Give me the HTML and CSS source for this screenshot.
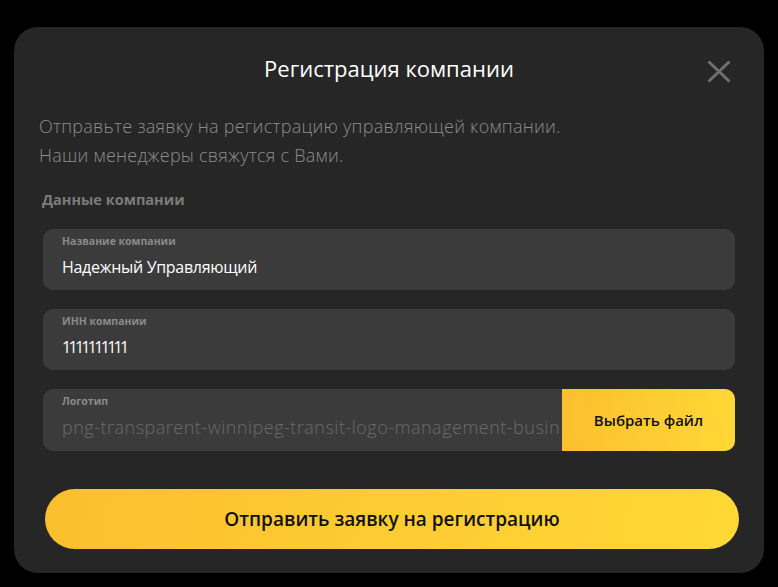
FILE: index.html
```html
<!DOCTYPE html>
<html lang="ru">
<head>
<meta charset="utf-8">
<title>Регистрация компании</title>
<link rel="stylesheet" href="styles.css">
</head>
<body>
<div class="modal">
  <div class="header">
    <span></span>
    <h1 class="title">Регистрация компании</h1>
    <button class="close" aria-label="Закрыть">
      <svg width="24" height="23" viewBox="0 0 24 23"><path d="M1.5 1.5 L22.5 21.5 M22.5 1.5 L1.5 21.5" stroke="#6f6f6f" stroke-width="3" fill="none"/></svg>
    </button>
  </div>
  <p class="desc">Отправьте заявку на регистрацию управляющей компании.<br>Наши менеджеры свяжутся с Вами.</p>
  <div class="section">Данные компании</div>
  <div class="fields">
    <div class="field">
      <div class="label">Название компании</div>
      <div class="value">Надежный Управляющий</div>
    </div>
    <div class="field">
      <div class="label">ИНН компании</div>
      <div class="value num">1111111111</div>
    </div>
    <div class="field file">
      <div class="file-info">
        <div class="label">Логотип</div>
        <div class="value muted">png-transparent-winnipeg-transit-logo-management-busin</div>
      </div>
      <div class="pick">Выбрать файл</div>
    </div>
  </div>
  <button class="submit">Отправить заявку на регистрацию</button>
</div>
</body>
</html>
```
FILE: styles.css
```css
html, body {
  margin: 0;
  padding: 0;
  background: #000;
  height: 100%;
}
body {
  font-family: "Open Sans", "Noto Sans", sans-serif;
  padding: 27px 0 0 14px;
  box-sizing: border-box;
}
.modal {
  width: 750px;
  height: 546px;
  box-sizing: border-box;
  background: #262626;
  border-radius: 24px;
  padding: 25px 25px 0 25px;
  display: flex;
  flex-direction: column;
}
.header {
  display: grid;
  grid-template-columns: 1fr auto 1fr;
  align-items: center;
  height: 30px;
}
.title {
  margin: 0;
  font-size: 22px;
  line-height: 30px;
  font-weight: 500;
  color: #fff;
}
.close {
  justify-self: end;
  margin-right: 8px;
  margin-top: 8px;
  padding: 0;
  border: 0;
  background: none;
  width: 24px;
  height: 23px;
  display: block;
}
.close svg { display: block; }
.desc {
  margin: 30px 0 0 0;
  font-size: 18px;
  letter-spacing: 0.25px;
  line-height: 29px;
  font-weight: 300;
  color: #8c8c8c;
}
.section {
  margin: 20px 0 0 3px;
  font-size: 14.5px;
  line-height: 20px;
  font-weight: 700;
  color: #7b7b7b;
}
.fields {
  margin: 19px 4px 0 4px;
  display: flex;
  flex-direction: column;
  gap: 19px;
}
.field {
  background: #3b3b3b;
  border-radius: 10px;
  padding: 5px 19px 12px 19px;
  height: 61px;
  box-sizing: border-box;
}
.label {
  font-size: 10.5px;
  line-height: 14px;
  font-weight: 700;
  color: #8a8a8a;
}
.value {
  margin-top: 8px;
  font-size: 16px;
  letter-spacing: -0.3px;
  line-height: 22px;
  color: #fff;
  white-space: nowrap;
}
.value.num {
  letter-spacing: -2.7px;
}
.value.muted {
  color: #6a6a6a;
  font-weight: 300;
  font-size: 18px;
  letter-spacing: 0.5px;
}
.field.file {
  display: flex;
  padding: 0;
  height: 62px;
}
.file-info {
  flex: 1;
  min-width: 0;
  overflow: hidden;
  padding: 5px 0 0 19px;
}
.pick {
  width: 173px;
  flex: none;
  border-radius: 0 10px 10px 0;
  background: linear-gradient(100deg, #fbbf2e 0%, #ffd836 100%);
  display: flex;
  align-items: center;
  justify-content: center;
  font-size: 15px;
  font-weight: 600;
  color: #111;
}
.submit {
  margin: 38px 0 0 6px;
  width: 694px;
  height: 60px;
  border: 0;
  border-radius: 30px;
  background: linear-gradient(100deg, #fbbf2e 0%, #ffd836 100%);
  font-family: "Open Sans", "Noto Sans", sans-serif;
  font-size: 19px;
  font-weight: 600;
  color: #111;
  padding: 0;
}
```
